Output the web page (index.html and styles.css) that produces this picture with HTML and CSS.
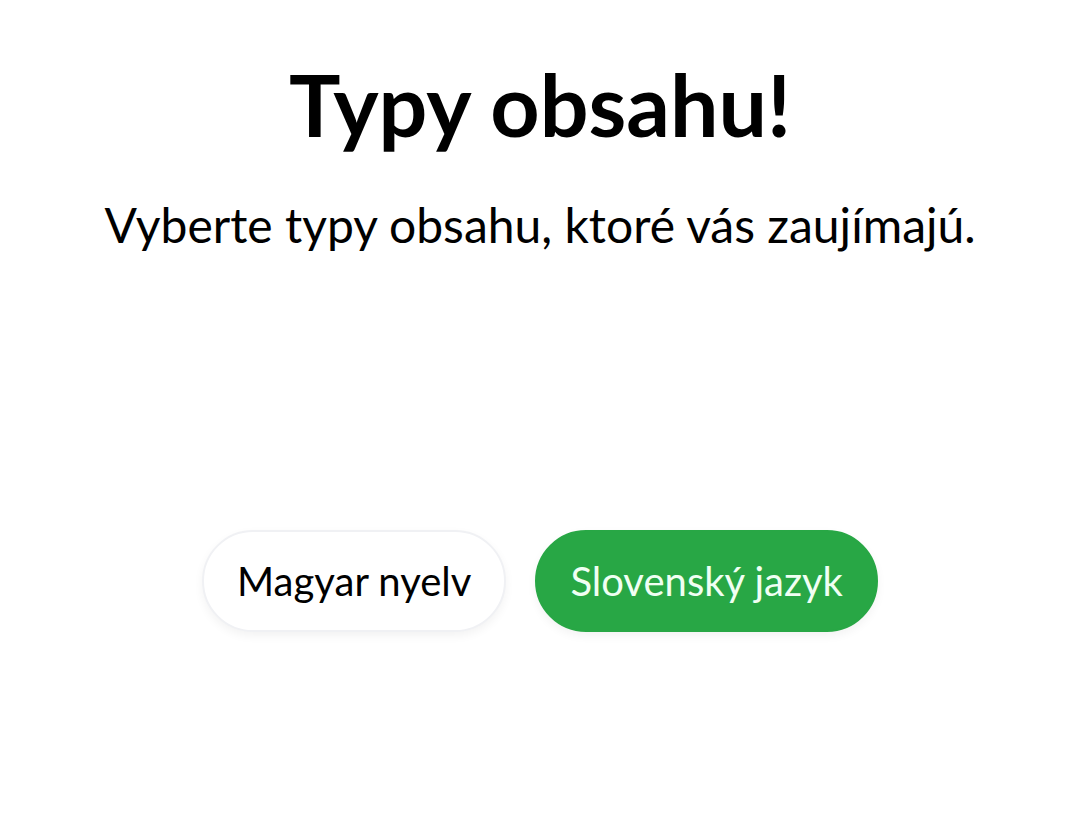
FILE: index.html
```html
<!DOCTYPE html>
<html lang="sk">
<head>
<meta charset="utf-8">
<title>Typy obsahu</title>
<link rel="stylesheet" href="styles.css">
</head>
<body>
<main class="page">
  <h1 class="title">Typy obsahu!</h1>
  <p class="subtitle">Vyberte typy obsahu, ktoré vás zaujímajú.</p>
  <div class="choices">
    <button class="chip">Magyar nyelv</button>
    <button class="chip chip-active">Slovenský jazyk</button>
  </div>
</main>
</body>
</html>
```
FILE: styles.css
```css
html, body {
  margin: 0;
  padding: 0;
  background: #ffffff;
}
body {
  font-family: Lato, "Noto Sans", sans-serif;
  color: #000;
}
.page {
  width: 1080px;
  height: 817px;
  display: flex;
  flex-direction: column;
  align-items: center;
}
.title {
  margin: 49px 0 0;
  font-size: 86px;
  font-weight: 700;
  line-height: 110px;
}
.subtitle {
  margin: 38px 0 0;
  font-size: 48px;
  font-weight: 400;
  line-height: 56px;
}
.choices {
  margin-top: 277px;
  display: flex;
  gap: 29px;
  align-items: center;
}
.chip {
  font-family: Lato, "Noto Sans", sans-serif;
  font-size: 40px;
  height: 102px;
  padding: 0 33px;
  border-radius: 51px;
  border: 2px solid #f0f1f4;
  background: #ffffff;
  color: #000;
  box-shadow: 0 4px 10px rgba(0, 0, 0, 0.05);
}
.chip-active {
  background: #28a745;
  border-color: #28a745;
  color: #f0fff3;
}
```
